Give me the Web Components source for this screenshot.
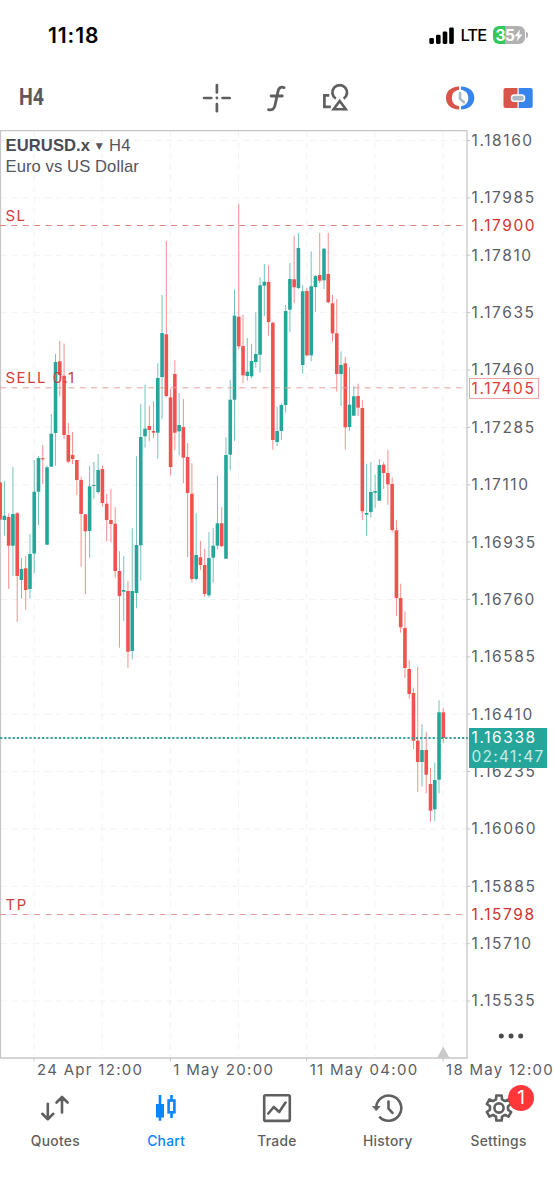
<!DOCTYPE html>
<html lang="en">
<head>
<meta charset="utf-8">
<meta name="viewport" content="width=device-width, initial-scale=1">
<title>EURUSD.x H4</title>
<style>
  html, body {
    margin: 0;
    background: #fff;
  }
</style>
</head>
<body>
<trading-app></trading-app>

<script>
/** Shared base: renders styles and markup into an open shadow root. */
class BaseElement extends HTMLElement {
  constructor() {
    super();
    this.attachShadow({ mode: 'open' });
  }

  connectedCallback() {
    this.shadowRoot.innerHTML = `<style>${this.getStyles()}</style>${this.getMarkup()}`;
  }
}

/**
 * <status-bar> Clock, signal, network and battery.
 */
class StatusBar extends BaseElement {
  getMarkup() {
    return `
      <span class="clock">11:18</span>
      <div class="right">
        <svg width="25" height="17" viewBox="429 26.5 25 17">
          <rect x="429.3" y="37.4" width="4.6" height="6" rx="1.3"/>
          <rect x="436" y="34.3" width="4.6" height="9.1" rx="1.3"/>
          <rect x="442.7" y="31" width="4.6" height="12.4" rx="1.3"/>
          <rect x="449.2" y="27" width="4.6" height="16.4" rx="1.3"/>
        </svg>
        <span class="net">LTE</span>
        <div class="battery">
          <span>35</span>
          <svg width="9" height="13" viewBox="0 0 9 13"><path d="M6 .5.6 7.2h3.2L2.8 12.5 8.4 5.6H5.2z" fill="#fff"/></svg>
        </div>
        <i></i>
      </div>
    `;
  }

  getStyles() {
    return `
      :host {
        display: flex;
        justify-content: space-between;
        align-items: center;
        box-sizing: border-box;
        height: 70px;
        padding: 0 26px 0 48px;
        color: #000;
      }
      .clock { font-size: 21px; font-weight: 600; letter-spacing: .9px; }
      .right { display: flex; align-items: center; }
      .net {
        margin-left: 6.5px;
        width: 32px;
        font-size: 16.5px;
        font-weight: 500;
        letter-spacing: -.9px;
      }
      .battery {
        display: flex;
        align-items: center;
        box-sizing: border-box;
        width: 32.5px;
        height: 18px;
        padding-left: 3px;
        border-radius: 6px;
        color: #fff;
        font-size: 15.5px;
        font-weight: 700;
        letter-spacing: -.6px;
        background: linear-gradient(90deg, #34c759 12px, #b1b1b3 12px);
      }
      i {
        width: 2px;
        height: 6px;
        margin-left: 1px;
        border-radius: 0 2px 2px 0;
        background: #b1b1b3;
      }
    `;
  }
}

/**
 * <tool-bar> Timeframe and chart tools.
 */
class ToolBar extends BaseElement {
  getMarkup() {
    return `
      <div class="frame"><b>H4</b></div>
      <svg class="cross" width="30" height="30" viewBox="202.5 83 30 30">
        <path d="M217.4 85v7.4M217.4 104v7.2M204.6 98h7.2M223 98h7.2"/>
        <circle cx="217.4" cy="98" r="1.4" fill="#5f5f5f" stroke="none"/>
      </svg>
      <svg class="func" width="20" height="28" viewBox="266.5 84 20 28">
        <path d="M284.6 87.6C281 86.4 279.2 88 278.5 91.4L275.5 105.2C274.7 109 272.8 110.5 269 109.7M271.6 96H282.8" stroke-width="2.8"/>
      </svg>
      <svg class="shapes" width="28" height="30" viewBox="322 83 28 30">
        <path d="M335.8 98.6A7.3 7.3 0 1 1 343.6 98.6" stroke-linecap="butt"/>
        <path d="M339.700 101L345.800 109.300H333.600z" stroke-linejoin="miter" stroke-width="2.6"/>
        <path d="M329.3 95.3H324.4V106.8H330.8" stroke-linecap="butt" stroke-linejoin="miter"/>
      </svg>
      <svg class="clock" width="30" height="26" viewBox="445 85 30 26">
        <path d="M459.2 86.6C451 86.8 446 91.2 446 98s5 11.2 13.2 11.4v-3.2c-4.600-.6-7.300-3.600-7.300-8.200s2.700-7.600 7.300-8.200z" fill="#d9544a" stroke="none"/>
        <path d="M461 86.6C469.200 86.8 474.300 91.200 474.300 98s-5.100 11.200-13.300 11.400v-3.200c4.600-.6 7.300-3.600 7.300-8.200s-2.700-7.600-7.300-8.200z" fill="#3785ec" stroke="none"/>
        <path d="M460 93v5.700l4 3.700" stroke="#a9bac6" stroke-width="2.600"/>
      </svg>
      <svg class="ticket" width="30" height="22" viewBox="503.500 87 30 22">
        <path d="M518 88h-12q-2 0-2 2v16q0 2 2 2h12z" fill="#d9544a" stroke="none"/>
        <path d="M519.200 88h12q2 0 2 2v16q0 2-2 2h-12z" fill="#3785ec" stroke="none"/>
        <rect x="512" y="94.900" width="13" height="6.400" rx="2.800" fill="#a9bac6" stroke="#fff" stroke-width="1.500"/>
      </svg>
    `;
  }

  getStyles() {
    return `
      :host {
        display: flex;
        align-items: center;
        box-sizing: border-box;
        height: 60px;
        padding: 0 21px 4px 19px;
      }
      svg {
        flex: none;
        fill: none;
        stroke: #5f5f5f;
        stroke-width: 2.7;
        stroke-linecap: round;
        stroke-linejoin: round;
      }
      .frame { width: 183px; color: #5a5a5a; }
      b {
        display: inline-block;
        margin-bottom: 2px;
        font: 700 23.5px Roboto, sans-serif;
        transform: scaleX(.83);
        transform-origin: 0 50%;
      }
      .func { margin-left: 34px; }
      .shapes { margin-left: 35.5px; }
      .clock { margin-left: auto; }
      .ticket { margin-left: 28.5px; }
    `;
  }
}

const UP = '#26a69a';
const DOWN = '#ef5350';
const STEP = 4.261;

// direction, body top, body bottom, wick top, wick bottom
const CANDLES = [
  ['d', 482.5, 519.5, 482.5, 519.5], ['u', 515.7, 520, 481, 535.7], ['d', 517, 545.7, 513.5, 589],
  ['u', 514, 545.7, 466.7, 576], ['d', 513.3, 576, 512, 622], ['u', 569, 580, 558, 598.7],
  ['d', 568.3, 590, 556, 609.7], ['u', 554, 589, 534, 598.7], ['u', 491.7, 553.5, 460, 573],
  ['u', 458, 491.7, 456, 525], ['d', 458.2, 459.4, 445, 484], ['u', 467.3, 544.7, 465.5, 544.7],
  ['u', 433.7, 466.7, 414, 467], ['u', 362, 433, 354, 465.7], ['d', 361.3, 375, 341, 396.7],
  ['d', 375.7, 435, 343.7, 439], ['d', 435, 461.7, 422.7, 463], ['d', 455, 459, 432, 464],
  ['d', 460, 480, 460, 495], ['d', 480, 514, 477, 566.7], ['d', 514.3, 531.3, 514, 594.3],
  ['u', 486.3, 531, 465.7, 558], ['u', 485, 486, 462, 499], ['u', 470, 492, 454, 494],
  ['d', 469, 503, 465.7, 506.7], ['d', 503.7, 520, 494, 541], ['d', 520, 524, 489, 542],
  ['d', 523.7, 571, 507, 577.7], ['d', 571, 596, 551.3, 647.7], ['u', 590, 591.7, 556, 621],
  ['d', 591, 651.7, 581, 667.7], ['u', 591, 651, 528.3, 659.3], ['u', 545, 593, 456.3, 608.3],
  ['u', 437, 545.3, 404, 580.7], ['u', 428.7, 436.3, 384.7, 447.7], ['d', 426, 430, 405.7, 441.3],
  ['d', 431, 432.7, 401.3, 438], ['u', 378, 432.7, 363, 458.7], ['u', 333, 377, 295, 419.3],
  ['d', 334.3, 396, 241, 397.3], ['d', 397.3, 467, 388.7, 475.3], ['d', 374, 432.7, 360.3, 450],
  ['u', 425, 431.3, 393, 455.3], ['d', 427, 457.7, 399, 483.3], ['d', 457, 493, 443, 557.3],
  ['d', 493.7, 579, 463.3, 582.7], ['u', 555, 579, 513.3, 580.7], ['d', 557.3, 565, 541, 570],
  ['d', 565, 594, 549, 596.7], ['u', 558, 595.3, 532, 597.3], ['u', 545.7, 557.7, 528, 582.7],
  ['u', 523.3, 545.7, 475.7, 549.3], ['d', 523.3, 546.3, 507, 546.3], ['u', 455, 558.7, 437.3, 558.7],
  ['u', 399.7, 454.7, 380, 470.3], ['u', 315.7, 399.7, 289.3, 441], ['d', 316.7, 346.3, 203.7, 349.3],
  ['d', 346, 375.3, 314.7, 383], ['u', 371.7, 376, 338, 380.7], ['u', 361, 376.3, 343.7, 378.3],
  ['u', 354, 362, 312.3, 367.7], ['u', 285.3, 354.7, 277.3, 372.7], ['u', 281.7, 285.7, 264, 316],
  ['d', 282, 322, 265.3, 335.7], ['d', 322.7, 440, 321.7, 449.7], ['u', 431, 442, 406.7, 446],
  ['u', 405, 431, 403.3, 440], ['u', 311, 405, 305, 412.7], ['u', 279, 309.7, 263, 332],
  ['d', 279.3, 287.3, 235.7, 303], ['u', 248, 288, 233, 289], ['u', 291.3, 365, 285, 373.7],
  ['d', 291, 355.3, 288, 356.3], ['u', 286.3, 355.3, 251.3, 361.3], ['u', 276, 287, 275, 312],
  ['d', 275, 280.7, 233, 283.3], ['u', 248.7, 280.3, 248, 289], ['d', 274, 302.3, 233, 303.3],
  ['d', 303.3, 333.3, 295, 341.7], ['d', 333.3, 374, 299, 391.7], ['u', 365, 374, 351.3, 406],
  ['d', 363.3, 427.3, 357, 449.3], ['u', 404.7, 427, 367.3, 431], ['u', 396.3, 415.7, 386, 415.7],
  ['d', 396, 407.7, 383.7, 416], ['d', 408, 511.3, 400, 520], ['u', 513, 514.7, 463.7, 535.7],
  ['u', 492, 512, 462, 517.7], ['u', 491, 492.7, 474.7, 507.7], ['u', 465, 500.7, 459, 501],
  ['d', 464.7, 473, 462, 489], ['d', 473, 484.3, 450, 504.7], ['d', 484, 530, 477.3, 532.3],
  ['d', 530.3, 598, 520, 616], ['d', 598, 627.3, 583.7, 632.7], ['d', 628, 668, 611.3, 678],
  ['d', 669, 694, 660, 698.7], ['d', 693, 740.7, 687.7, 749], ['d', 740.7, 762, 666.7, 792],
  ['u', 750, 762, 724, 786.7], ['d', 750, 774.7, 731.7, 793.3], ['d', 784, 810.7, 767.7, 821.7],
  ['u', 780, 809.3, 762.7, 821.3], ['u', 712.3, 779.7, 700.3, 793.3], ['d', 712.3, 738, 708, 743.3]
];

/**
 * <candle-chart> Plot area: grid, candles, order levels and the bid line.
 */
class CandleChart extends BaseElement {
  drawGrid() {
    let d = '';
    for (let i = 0; i < 16; i++) d += `M1 ${140.5 + i * 57.37}H466`;
    for (let i = 0; i < 7; i++) d += `M${34 + i * 68.17} 131V1057`;
    return `<path d="${d}" stroke="#f2f2f2" stroke-dasharray="6 5"/>`;
  }

  drawTicks() {
    let d = '';
    for (let i = 0; i < 16; i++) d += `M467 ${140.5 + i * 57.37}h3`;
    for (let i = 0; i < 4; i++) d += `M${34 + i * 136.33} 1058v3.5`;
    return `<path d="${d}" stroke="#c4c4c4"/>`;
  }

  drawCandles() {
    return CANDLES.map(([dir, top, bottom, high, low], i) => {
      const x = 0.15 + i * STEP;
      const color = dir === 'u' ? UP : DOWN;
      return `<path d="M${x} ${high}V${low}" stroke="${color}" stroke-opacity=".65"/>
        <rect x="${x - 1.8}" y="${top}" width="3.6" height="${bottom - top}" fill="${color}"/>`;
    }).join('');
  }

  drawLevel(y, label, color) {
    return `<path d="M0 ${y}H466" stroke="${color}" stroke-dasharray="6 5.4"/>
      <text x="5.5" y="${y - 4.8}">${label}</text>`;
  }

  getMarkup() {
    return `
      <svg width="470" height="932" viewBox="0 130 470 932">
        ${this.drawGrid()}
        <path d="M0 130.5H467V1058H.5V130.5" fill="none" stroke="#c6c6c6" stroke-width="1.3"/>
        ${this.drawCandles()}
        ${this.drawLevel(225.5, 'SL', '#de8581')}
        ${this.drawLevel(387.8, 'SELL 0.1', '#e6a09e')}
        ${this.drawLevel(914.5, 'TP', '#e29a97')}
        <path d="M0 738H468" stroke="#3da399" stroke-width="1.8" stroke-dasharray="2.3 1.9"/>
        <path d="M437 1058L443.2 1046.5L449.5 1058z" fill="#c9c9c9"/>
        ${this.drawTicks()}
      </svg>
      <div class="title"><b>EURUSD.x</b> <i>▼</i> H4<br>Euro vs US Dollar</div>
    `;
  }

  getStyles() {
    return `
      :host { display: block; position: relative; width: 470px; height: 932px; }
      svg { display: block; }
      text {
        fill: #d0403b;
        font-size: 15px;
        letter-spacing: 1.5px;
      }
      .title {
        position: absolute;
        left: 5.5px;
        top: 4.5px;
        font: 16.6px/21px "Liberation Sans", Arial, sans-serif;
        letter-spacing: .09px;
        color: #52555e;
      }
      b { color: #484b54; }
      i { font: 9px "DejaVu Sans", sans-serif; vertical-align: 2px; margin: 0 1.5px 0 1px; }
    `;
  }
}

/**
 * <price-axis> Price scale with level tags laid over it.
 */
class PriceAxis extends BaseElement {
  getMarkup() {
    const rows = [];
    for (let i = 0; i < 16; i++) {
      rows.push(`<div class="row">${(1.1816 - i * 0.00175).toFixed(5)}</div>`);
    }
    return `
      ${rows.join('')}
      <div class="tag level" style="top: 85.5px">1.17900</div>
      <div class="tag boxed" style="top: 247.5px">1.17405</div>
      <div class="tag level" style="top: 774.5px">1.15798</div>
      <div class="tag bid" style="top: 598px">1.16338<br><span>02:41:47</span></div>
      <svg class="more" width="26" height="6" viewBox="0 0 26 6">
        <circle cx="3.3" cy="3" r="2.5"/><circle cx="13" cy="3" r="2.5"/><circle cx="22.7" cy="3" r="2.5"/>
      </svg>
    `;
  }

  getStyles() {
    return `
      :host {
        display: block;
        position: relative;
        height: 932px;
        color: #5b5e66;
        font-size: 15.5px;
        letter-spacing: 1.6px;
      }
      .row { height: 57.37px; padding-left: 1.5px; line-height: 21px; }
      .tag {
        position: absolute;
        left: -1px;
        box-sizing: border-box;
        padding-left: 2.5px;
        line-height: 20px;
      }
      .level { color: #d0342f; }
      .boxed {
        width: 70px;
        padding-left: 1.5px;
        border: 1px solid #f2a5a0;
        background: #fff;
        color: #e03c35;
        line-height: 19px;
      }
      .bid {
        width: 78px;
        height: 40px;
        background: ${UP};
        color: #fff;
        line-height: 19px;
      }
      .bid span { color: #c5ebe5; letter-spacing: 1.25px; }
      .more { position: absolute; left: 28px; top: 902.5px; fill: #4a4a4a; }
    `;
  }
}

/**
 * <time-axis> Date labels below the plot.
 */
class TimeAxis extends BaseElement {
  getMarkup() {
    return ['24 Apr 12:00', '1 May 20:00', '11 May 04:00', '18 May 12:00']
      .map((label) => `<span>${label}</span>`).join('');
  }

  getStyles() {
    return `
      :host {
        display: flex;
        height: 18px;
        padding-left: 37px;
        color: #5b5e66;
        font-size: 15px;
        line-height: 16px;
        letter-spacing: 1.3px;
        white-space: nowrap;
      }
      span { flex: none; width: 136.33px; }
    `;
  }
}

/**
 * <tab-item> One entry of the bottom bar: icon in the slot, label and badge as attributes.
 */
class TabItem extends BaseElement {
  getMarkup() {
    const badge = this.getAttribute('badge');
    return `
      <div class="icon"><slot></slot>${badge ? `<em>${badge}</em>` : ''}</div>
      <span>${this.getAttribute('label')}</span>
    `;
  }

  getStyles() {
    return `
      :host {
        flex: 1;
        display: flex;
        flex-direction: column;
        align-items: center;
        color: #5f5f5f;
      }
      :host([active]) { color: #0a84ff; }
      .icon { position: relative; width: 32px; height: 32px; }
      span {
        margin-top: 7.5px;
        font-size: 13.8px;
        font-weight: 500;
        line-height: 18px;
        letter-spacing: .3px;
      }
      em {
        position: absolute;
        left: 25.5px;
        top: -7px;
        width: 26px;
        height: 26px;
        border-radius: 50%;
        background: #ff3739;
        color: #fff;
        font-size: 19px;
        font-style: normal;
        line-height: 26px;
        text-align: center;
      }
    `;
  }
}

/**
 * <tab-bar> Bottom navigation.
 */
class TabBar extends BaseElement {
  gearPath() {
    const point = (r, deg) => {
      const a = deg * Math.PI / 180;
      return `${(16 + r * Math.cos(a)).toFixed(2)} ${(16 + r * Math.sin(a)).toFixed(2)}`;
    };
    const points = [];
    for (let i = 0; i < 6; i++) {
      const a = -90 + i * 60;
      points.push(point(9.2, a - 19), point(12.8, a - 12), point(12.8, a + 12), point(9.2, a + 19));
    }
    return `M${points.join('L')}z`;
  }

  getMarkup() {
    return `
      <tab-item label="Quotes">
        <svg viewBox="39 1092 32 32"><path d="M47.8 1103.8V1119M42.3 1113.8L47.8 1119.2L53.3 1113.8M62 1112.5V1097M56.5 1102.5L62 1097L67.6 1102.5"/></svg>
      </tab-item>
      <tab-item label="Chart" active>
        <svg viewBox="150 1092 32 32"><path d="M160 1095V1120.7M171.5 1095V1100M171.5 1113V1118" stroke-linecap="butt"/><rect x="156" y="1104" width="8" height="13.5" fill="currentColor" stroke="none"/><rect x="168.6" y="1100.5" width="5.8" height="11.8" stroke-linejoin="miter"/></svg>
      </tab-item>
      <tab-item label="Trade">
        <svg viewBox="260.5 1092 32 32"><rect x="263.7" y="1095.3" width="25.6" height="25.6" rx="1.5"/><path d="M267.8 1113.5L273.3 1107L278.7 1112L285 1102.5"/></svg>
      </tab-item>
      <tab-item label="History">
        <svg viewBox="371.5 1092 32 32"><path d="M375.6 1107.5A12.6 12.6 0 1 1 378.8 1116.6" stroke-linecap="butt"/><path d="M372.5 1106.5H379.5L375.8 1110.5z" fill="currentColor" stroke-width=".8"/><path d="M388 1101.5V1108.7L392 1112.8"/></svg>
      </tab-item>
      <tab-item label="Settings" badge="1">
        <svg viewBox="0 0 32 32"><path d="${this.gearPath()}"/><circle cx="16" cy="16" r="4.6"/></svg>
      </tab-item>
    `;
  }

  getStyles() {
    return `
      :host { display: flex; height: 107px; padding-top: 12px; }
      svg {
        display: block;
        width: 32px;
        height: 32px;
        fill: none;
        stroke: currentColor;
        stroke-width: 2.6;
        stroke-linecap: round;
        stroke-linejoin: round;
      }
    `;
  }
}

/**
 * <trading-app> Page shell.
 */
class TradingApp extends BaseElement {
  getMarkup() {
    return `
      <status-bar></status-bar>
      <tool-bar></tool-bar>
      <main>
        <candle-chart></candle-chart>
        <price-axis></price-axis>
      </main>
      <time-axis></time-axis>
      <tab-bar></tab-bar>
    `;
  }

  getStyles() {
    return `
      :host {
        display: flex;
        flex-direction: column;
        width: 554px;
        height: 1199px;
        overflow: hidden;
        background: #fff;
        font-family: Inter, "Liberation Sans", sans-serif;
      }
      main { display: grid; grid-template-columns: 470px 1fr; }
    `;
  }
}

customElements.define('status-bar', StatusBar);
customElements.define('tool-bar', ToolBar);
customElements.define('candle-chart', CandleChart);
customElements.define('price-axis', PriceAxis);
customElements.define('time-axis', TimeAxis);
customElements.define('tab-item', TabItem);
customElements.define('tab-bar', TabBar);
customElements.define('trading-app', TradingApp);
</script>
</body>
</html>
